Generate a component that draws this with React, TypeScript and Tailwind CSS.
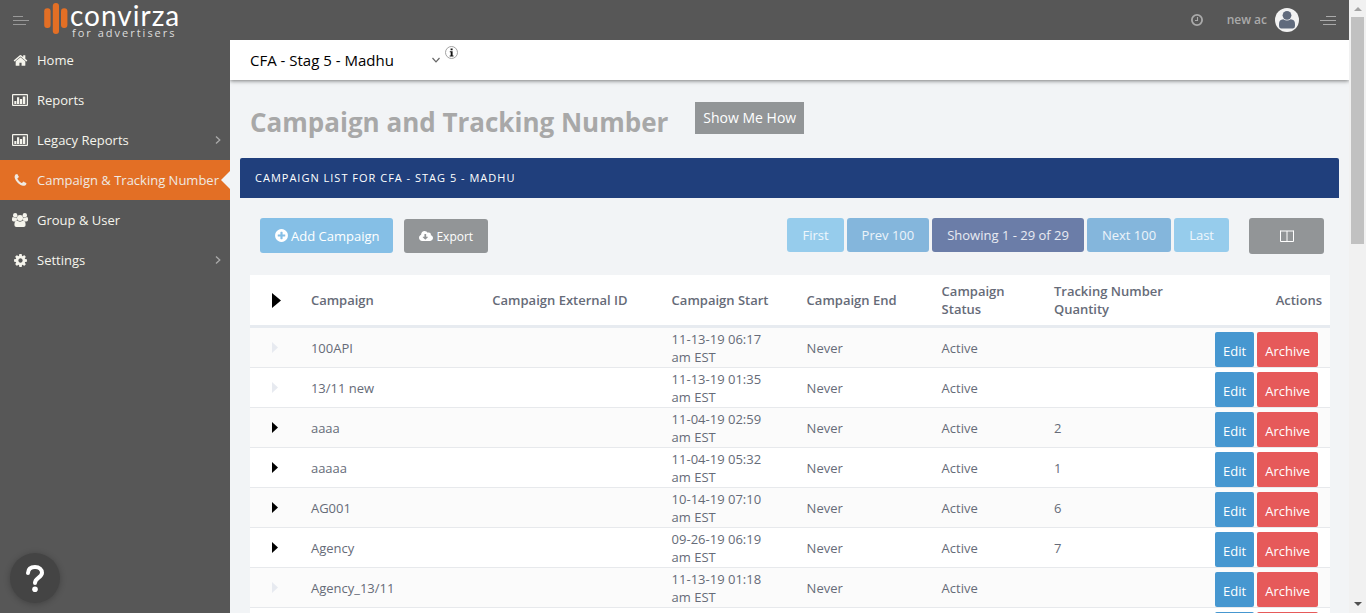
import React from "react";
import { FaCloudDownloadAlt } from "react-icons/fa";

const ICONS = {
  home: "M1472 992v480q0 26-19 45t-45 19h-384v-384h-256v384h-384q-26 0-45-19t-19-45v-480q0-1 .5-3t.5-3l575-474 575 474q1 2 1 6zm223-69l-62 74q-8 9-21 11h-3q-13 0-21-7l-692-577-692 577q-12 8-24 7-13-2-21-11l-62-74q-8-10-7-23.5t11-21.5l719-599q32-26 76-26t76 26l244 204v-195q0-14 9-23t23-9h192q14 0 23 9t9 23v408l219 182q10 8 11 21.5t-7 23.5z",
  phone: "M1600 1240q0 27-10 70.5t-21 68.5q-21 50-122 106-94 51-186 51-27 0-53-3.5t-57.5-12.5-47-14.5-55.5-20.5-49-18q-98-35-175-83-127-79-264-216t-216-264q-48-77-83-175-3-9-18-49t-20.5-55.5-14.5-47-12.5-57.5-3.5-53q0-92 51-186 56-101 106-122 25-11 68.5-21t70.5-10q14 0 21 3 18 6 53 76 11 19 30 54t35 63.5 31 53.5q3 4 17.5 25t21.5 35.5 7 28.5q0 20-28.5 50t-62 55-62 53-28.5 46q0 9 5 22.5t8.5 20.5 14 24 11.5 19q76 137 174 235t235 174q2 1 19 11.5t24 14 20.5 8.5 22.5 5q18 0 46-28.5t53-62 55-62 50-28.5q14 0 28.5 7t35.5 21.5 25 17.5q25 15 53.5 31t63.5 35 54 30q70 35 76 53 3 7 3 21z",
  cog: "M1152 896q0-106-75-181t-181-75-181 75-75 181 75 181 181 75 181-75 75-181zm512-109v222q0 12-8 23t-20 13l-185 28q-19 54-39 91 35 50 107 138 10 12 10 25t-9 23q-27 37-99 108t-94 71q-12 0-26-9l-138-108q-44 23-91 38-16 136-29 186-7 28-36 28h-222q-14 0-24.5-8.5t-11.5-21.5l-28-184q-49-16-90-37l-141 107q-10 9-25 9-14 0-25-11-126-114-165-168-7-10-7-23 0-12 8-23 15-21 51-66.5t54-70.5q-27-50-41-99l-183-27q-13-2-21-12.5t-8-23.5v-222q0-12 8-23t19-13l186-28q14-46 39-92-40-57-107-138-10-12-10-24 0-10 9-23 26-36 98.5-107.5t94.5-71.5q13 0 26 10l138 107q44-23 91-38 16-136 29-186 7-28 36-28h222q14 0 24.5 8.5t11.5 21.5l28 184q49 16 90 37l142-107q9-9 24-9 13 0 25 10 129 119 165 170 7 8 7 22 0 12-8 23-15 21-51 66.5t-54 70.5q26 50 41 98l183 28q13 2 21 12.5t8 23.5z",
  plus: "M1344 960v-128q0-26-19-45t-45-19h-256v-256q0-26-19-45t-45-19h-128q-26 0-45 19t-19 45v256h-256q-26 0-45 19t-19 45v128q0 26 19 45t45 19h256v256q0 26 19 45t45 19h128q26 0 45-19t19-45v-256h256q26 0 45-19t19-45zm320-64q0 209-103 385.5t-279.5 279.5-385.5 103-385.5-103-279.5-279.5-103-385.5 103-385.5 279.5-279.5 385.5-103 385.5 103 279.5 279.5 103 385.5z",
};

function Glyph({ d }: { d: string }) {
  return (
    <svg className="size-[15px]" viewBox="0 0 1792 1792" fill="currentColor" aria-hidden="true">
      <path d={d} />
    </svg>
  );
}

function ChartIcon() {
  return (
    <svg className="h-3 w-4" viewBox="0 0 16 12" fill="currentColor" aria-hidden="true">
      <path fillRule="evenodd" d="M1 0h14a1 1 0 0 1 1 1v10a1 1 0 0 1-1 1H1a1 1 0 0 1-1-1V1a1 1 0 0 1 1-1zM1.2 1.2v9.6h13.6V1.2z" />
      <path d="M2.3 7h2.1v3H2.3zM5 3.3h2.2V10H5zM7.9 5h2.2v5H7.9zM10.8 2.5H13.3V10h-2.5z" />
    </svg>
  );
}

function UsersIcon() {
  return (
    <svg className="h-[14px] w-4" viewBox="0 0 16 14" fill="currentColor" aria-hidden="true">
      <circle cx="3.2" cy="2.3" r="2.2" />
      <circle cx="12.8" cy="2.3" r="2.2" />
      <path d="M0 7V6Q0 4 1 4Q3 5.4 5 4.4Q4.6 6.2 5.2 7.2Q3.8 7.4 3 8.4H1.5Q0 8.4 0 7zM16 7V6Q16 4 15 4Q13 5.4 11 4.4Q11.4 6.2 10.8 7.2Q12.2 7.4 13 8.4h1.5Q16 8.4 16 7z" />
      <circle cx="8" cy="4.9" r="3" />
      <path d="M2.4 12q0-4.3 2.4-4.5Q8 9.8 11.2 7.5Q13.6 7.7 13.6 12q0 2-2 2H4.4q-2 0-2-2z" />
    </svg>
  );
}

const NAV = [
  { label: "Home", icon: <Glyph d={ICONS.home} /> },
  { label: "Reports", icon: <ChartIcon /> },
  { label: "Legacy Reports", icon: <ChartIcon />, expandable: true },
  { label: "Campaign & Tracking Number", icon: <Glyph d={ICONS.phone} />, active: true },
  { label: "Group & User", icon: <UsersIcon /> },
  { label: "Settings", icon: <Glyph d={ICONS.cog} />, expandable: true },
];

const ROWS = [
  { name: "100API", start: "11-13-19 06:17 am EST", end: "Never", status: "Active", qty: "" },
  { name: "13/11 new", start: "11-13-19 01:35 am EST", end: "Never", status: "Active", qty: "" },
  { name: "aaaa", start: "11-04-19 02:59 am EST", end: "Never", status: "Active", qty: "2" },
  { name: "aaaaa", start: "11-04-19 05:32 am EST", end: "Never", status: "Active", qty: "1" },
  { name: "AG001", start: "10-14-19 07:10 am EST", end: "Never", status: "Active", qty: "6" },
  { name: "Agency", start: "09-26-19 06:19 am EST", end: "Never", status: "Active", qty: "7" },
  { name: "Agency_13/11", start: "11-13-19 01:18 am EST", end: "Never", status: "Active", qty: "" },
  { name: "", start: "", end: "", status: "", qty: "" },
];

function Logo() {
  return (
    <a href="#" aria-label="convirza for advertisers" className="ml-[15px] flex h-10 items-start">
      <svg className="mt-[3px] h-[31px] w-6 shrink-0" viewBox="0 0 24 31" fill="#e36f25" aria-hidden="true">
        <rect x="0.2" y="5.3" width="6.4" height="19.7" rx="3" />
        <rect x="8.8" y="0" width="6.2" height="31" rx="3" />
        <rect x="17" y="5.3" width="6.4" height="19.7" rx="3" />
      </svg>
      <svg className="ml-[2px] h-10 w-28 overflow-visible" viewBox="0 0 112 40" fill="#fff" aria-hidden="true">
        <text x="0" y="26" fontFamily="Lato, sans-serif" fontSize="28" letterSpacing="1">convirza</text>
        <text x="2" y="37" fontFamily="'Open Sans', sans-serif" fontSize="11" fill="#ddd" letterSpacing="2">for advertisers</text>
      </svg>
    </a>
  );
}

function Header() {
  return (
    <header className="flex h-10 shrink-0 items-center bg-[#575757] px-[13px]">
      <button type="button" aria-label="Toggle sidebar" className="text-[#999]">
        <svg className="h-[9px] w-4" viewBox="0 0 16 9" fill="currentColor">
          <path d="M0 0h10v1H0zM0 4h16v1H0zM0 8h13v1H0z" />
        </svg>
      </button>
      <Logo />
      <div className="ml-auto flex items-center text-[#aaa]">
        <button type="button" aria-label="History">
          <svg className="size-3" viewBox="0 0 12 12" fill="none" stroke="currentColor">
            <circle cx="6" cy="6" r="5.1" strokeWidth="1.8" />
            <path d="M6.5 3v3.5H4" strokeWidth="1.1" />
          </svg>
        </button>
        <a href="#" className="ml-6 flex items-center gap-2 text-xs font-semibold">
          new ac
          <svg className="size-6" viewBox="0 0 24 24" aria-hidden="true">
            <circle cx="12" cy="12" r="12" fill="#f2f2f2" />
            <circle cx="12" cy="7.3" r="4.4" fill="#606a7c" />
            <path d="M4 18v-2q0-4.5 4.3-4.8q3.7 2.4 7.4 0q4.3 .3 4.3 4.8v2q0 2.4-2 2.4H6q-2 0-2-2.4z" fill="#606a7c" />
          </svg>
        </a>
        <button type="button" aria-label="Open quick menu" className="ml-[21px]">
          <svg className="h-[9px] w-4" viewBox="0 0 16 9" fill="currentColor">
            <path d="M6 0h10v1H6zM0 4h16v1H0zM3 8h13v1H3z" />
          </svg>
        </button>
      </div>
    </header>
  );
}

function Sidebar() {
  return (
    <nav className="w-[230px] shrink-0 bg-[#575757]">
      <ul>
        {NAV.map((item) => (
          <li key={item.label}>
            <a
              href="#"
              className={
                item.active
                  ? "relative flex h-10 items-center bg-[#e36f25] px-3 text-[13px] text-[#efe9e2]"
                  : "relative flex h-10 items-center px-3 text-[13px] text-[#f5f4ec]"
              }
            >
              <span className="mr-[9px] flex w-4 shrink-0 justify-center">{item.icon}</span>
              <span className="pt-0.5 whitespace-nowrap">{item.label}</span>
              {item.expandable && (
                <svg className="mr-[-3px] ml-auto h-2 w-[6px]" viewBox="0 0 6 8" fill="none" stroke="#aaa" strokeWidth="1.3" aria-hidden="true">
                  <path d="M1 0.5L4.8 4L1 7.5" />
                </svg>
              )}
              {item.active && (
                <svg className="absolute top-[11px] right-0 h-[18px] w-[9px]" viewBox="0 0 9 18" fill="#f2f4f6" aria-hidden="true">
                  <path d="M9 0v18L0 9z" />
                </svg>
              )}
            </a>
          </li>
        ))}
      </ul>
    </nav>
  );
}

function AccountBar() {
  return (
    <div className="z-10 flex h-10 shrink-0 items-start bg-white pl-5 shadow-[0_1px_4px_rgba(0,0,0,0.5)]">
      <div className="relative flex h-10 items-center">
        <select
          aria-label="Account"
          defaultValue="CFA - Stag 5 - Madhu"
          className="h-8 w-48 appearance-none bg-transparent text-[15px] text-black"
        >
          <option>CFA - Stag 5 - Madhu</option>
        </select>
        <svg className="pointer-events-none absolute top-[17px] right-0.5 h-1.5 w-2" viewBox="0 0 8 6" fill="none" stroke="#666" strokeWidth="1.2" aria-hidden="true">
          <path d="M0.5 1L4 4.8L7.5 1" />
        </svg>
      </div>
      <svg className="mt-[6px] ml-[3px] size-[13px]" viewBox="0 0 13 13" role="img" aria-label="Information">
        <circle cx="6.5" cy="6.5" r="6" fill="#fff" stroke="#999" strokeWidth="0.9" />
        <path d="M5.6 2.5h2v1.8h-2zM4.8 5.2h2.8v4.2h.9v1H4.7v-1h1V6.2h-.9z" fill="#111" />
      </svg>
    </div>
  );
}

function Caret({ large, dim }: { large?: boolean; dim?: boolean }) {
  return (
    <svg className={large ? "h-[15px] w-[9px]" : "h-[11px] w-1.5"} viewBox="0 0 6 10" preserveAspectRatio="none" fill={dim ? "#e7eaf0" : "#000"} aria-hidden="true">
      <path d="M0 0L6 5L0 10z" />
    </svg>
  );
}

function Toolbar() {
  const page = "h-[34px] rounded-[3px] px-[15px] pt-0.5 text-[13px] whitespace-nowrap text-white/85";
  return (
    <div className="flex items-start px-5 pt-5 pr-[15px]">
      <button type="button" className="flex h-[35px] items-center gap-0.5 rounded-[3px] bg-[#85bfe6] px-[14px] text-[13px] whitespace-nowrap text-white">
        <Glyph d={ICONS.plus} />
        <span className="pt-0.5">Add Campaign</span>
      </button>
      <button type="button" className="mt-px ml-[11px] flex h-[34px] items-center gap-[3px] rounded-[3px] bg-[#929597] px-[15px] text-xs whitespace-nowrap text-white">
        <FaCloudDownloadAlt className="size-[14px]" />
        <span className="pt-0.5">Export</span>
      </button>
      <div className="ml-auto flex gap-[3px]">
        <button type="button" className={`${page} bg-[#96ccec]`}>First</button>
        <button type="button" className={`${page} bg-[#84b6dc]`}>Prev 100</button>
        <button type="button" className={`${page} bg-[#6b7da8]`}>Showing 1 - 29 of 29</button>
        <button type="button" className={`${page} bg-[#84b6dc]`}>Next 100</button>
        <button type="button" className={`${page} bg-[#96ccec]`}>Last</button>
      </div>
      <button type="button" aria-label="Choose columns" className="ml-5 flex h-9 w-[75px] shrink-0 items-center justify-center rounded-[3px] bg-[#929597]">
        <svg className="h-3 w-[14px]" viewBox="0 0 14 12" fill="none" stroke="#fff" aria-hidden="true">
          <path d="M0.5 1h13M0.5 0.5v11h13v-11M7 1v10" />
        </svg>
      </button>
    </div>
  );
}

function CampaignTable() {
  return (
    <div className="mt-[21px] mr-[9px] ml-[10px]">
      <table className="w-full table-fixed border-collapse bg-white text-left text-[13px] leading-[18px] text-[#666b78]">
        <colgroup>
          <col className="w-[4.9%]" />
          <col className="w-[16.8%]" />
          <col className="w-[16.6%]" />
          <col className="w-[12.5%]" />
          <col className="w-[12.5%]" />
          <col className="w-[10.4%]" />
          <col className="w-[12.5%]" />
          <col />
        </colgroup>
        <thead>
          <tr className="h-[51px] border-b-[3px] border-[#e7ebf0]">
            <th className="pt-px pl-[22px]"><Caret large /></th>
            <th className="px-2 font-semibold">Campaign</th>
            <th className="px-2 font-semibold">Campaign External ID</th>
            <th className="px-2 font-semibold">Campaign Start</th>
            <th className="px-2 font-semibold">Campaign End</th>
            <th className="px-2 font-semibold">Campaign Status</th>
            <th className="px-2 font-semibold">Tracking Number Quantity</th>
            <th className="px-2 text-right font-semibold">Actions</th>
          </tr>
        </thead>
        <tbody>
          {ROWS.map((row) => (
            <tr key={row.name} className="h-10 border-b border-[#e7e9ec] odd:bg-[#fbfbfb]">
              <td className="pl-[22px]"><Caret dim={!row.qty} /></td>
              <td className="px-2 pt-px">{row.name}</td>
              <td className="px-2" />
              <td className="pt-px pr-8 pl-2">{row.start}</td>
              <td className="px-2 pt-px">{row.end}</td>
              <td className="px-2 pt-px">{row.status}</td>
              <td className="px-2 pt-px">{row.qty}</td>
              <td className="pr-3">
                <div className="flex justify-end gap-[3px] pt-1">
                  <button type="button" className="h-[35px] rounded-xs bg-[#4697d0] px-2 pt-[3px] text-white">Edit</button>
                  <button type="button" className="h-[35px] rounded-xs bg-[#e65a5a] px-2 pt-[3px] text-white">Archive</button>
                </div>
              </td>
            </tr>
          ))}
        </tbody>
      </table>
    </div>
  );
}

function PageScrollbar() {
  return (
    <div className="flex w-[17px] shrink-0 flex-col items-center bg-[#f1f1f1] px-0.5" aria-hidden="true">
      <svg className="h-[17px] w-2 shrink-0" viewBox="0 0 8 17" fill="#a3a3a3"><path d="M0 11L4 7L8 11z" /></svg>
      <div className="min-h-0 w-full flex-1"><div className="h-[39.2%] w-full bg-[#c1c1c1]" /></div>
      <svg className="h-[17px] w-2 shrink-0" viewBox="0 0 8 17" fill="#505050"><path d="M0 6L4 10L8 6z" /></svg>
    </div>
  );
}

export default function App() {
  return (
    <div className="flex h-screen overflow-hidden bg-[#f2f4f6] font-['Open_Sans','Noto_Sans',sans-serif]">
      <div className="flex min-w-0 flex-1 flex-col">
        <Header />
        <div className="flex min-h-0 flex-1">
          <Sidebar />
          <main className="flex min-w-0 flex-1 flex-col overflow-hidden">
            <AccountBar />
            <div className="flex h-[78px] shrink-0 items-start pt-[22px] pl-5">
              <h1 className="text-[26px] leading-10 font-bold whitespace-nowrap text-[#a8a8a8]">Campaign and Tracking Number</h1>
              <button type="button" className="ml-[27px] h-8 bg-[#929597] px-2 text-sm whitespace-nowrap text-white">Show Me How</button>
            </div>
            <section className="mr-[10px] ml-[10px]">
              <h2 className="flex h-10 items-center rounded-t-xs bg-[#203f7c] px-[15px] text-[11px] tracking-[1px] text-white uppercase">
                Campaign list for CFA - Stag 5 - Madhu
              </h2>
              <Toolbar />
              <CampaignTable />
            </section>
          </main>
        </div>
      </div>
      <PageScrollbar />
      <button type="button" aria-label="Help" className="fixed bottom-[10px] left-[10px] flex size-[50px] items-center justify-center rounded-full bg-[#444] shadow-[0_1px_6px_rgba(0,0,0,0.25)]">
        <svg className="h-[27px] w-[18px]" viewBox="0 0 18 27" fill="none" aria-hidden="true">
          <path d="M2 8C2.2 4 5 2 9 2C13.4 2 16 4.6 16 7.8C16 12.6 9 12.8 9 18" stroke="#fff" strokeWidth="4" strokeLinecap="round" />
          <circle cx="9" cy="24.2" r="2.8" fill="#fff" />
        </svg>
      </button>
    </div>
  );
}
